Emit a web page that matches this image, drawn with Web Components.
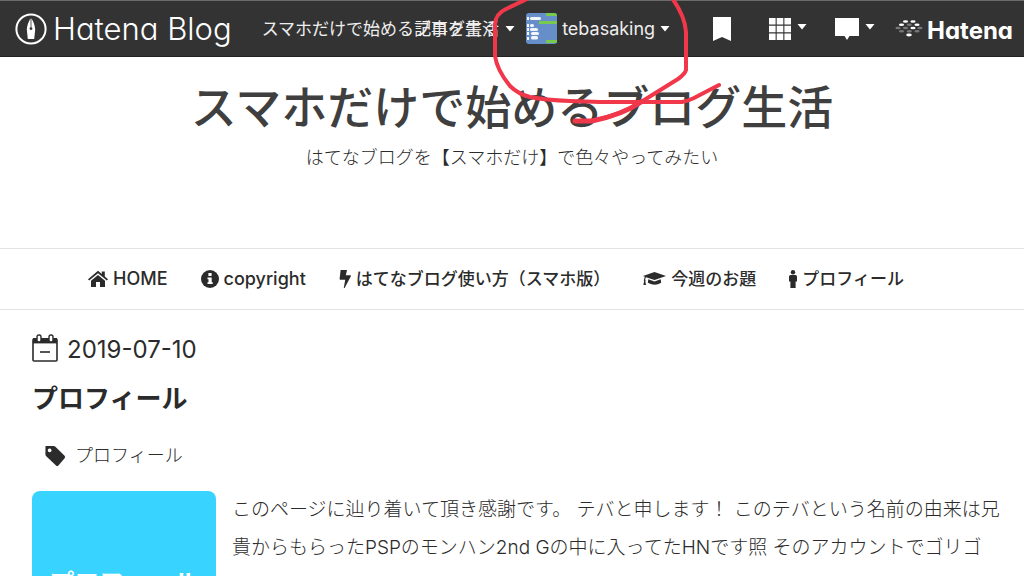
<!DOCTYPE html>
<html lang="ja">
<head>
<meta charset="utf-8">
<meta name="viewport" content="width=device-width, initial-scale=1">
<title>スマホだけで始めるブログ生活</title>
<style>
html { scrollbar-width: none; }
body { margin: 0; background: #fff; color: #2b2b2b; font-family: Inter, "Noto Sans CJK JP", sans-serif; }
</style>
</head>
<body>
<blog-page></blog-page>
<script>
const define = (name, html) => {
  const template = document.createElement('template');
  template.innerHTML = html;
  customElements.define(name, class extends HTMLElement {
    constructor() {
      super();
      this.attachShadow({ mode: 'open' }).append(template.content.cloneNode(true));
    }
  });
};

define('caret-down', `
<style>:host { display: block; } svg { display: block; }</style>
<svg width="10" height="6" viewBox="0 0 10 6" aria-hidden="true"><path d="M0.5 0H9.5L5 5.6Z" fill="#fff"/></svg>`);

define('blog-logo', `
<style>
:host { display: block; }
a { display: flex; align-items: center; gap: 6px; color: #fff; text-decoration: none; font-size: 31px; line-height: 36px; font-weight: 300; white-space: nowrap; font-feature-settings: "cv11"; }
svg { display: block; flex: none; }
</style>
<a href="#">
  <svg width="32" height="32" viewBox="0 0 32 32" aria-hidden="true">
    <circle cx="16" cy="16" r="14.6" fill="none" stroke="#fff" stroke-width="2"/>
    <path d="M15.6 5.2V14.2a1.4 1.4 0 1 0 .8 0V5.2C18.6 9 20 12.6 20.2 16.4L19.2 26H12.8L11.8 16.4C12 12.6 13.4 9 15.6 5.2Z" fill="#fff"/>
  </svg><span>Hatena Blog</span>
</a>`);

define('blog-menu', `
<style>
:host { display: flex; align-items: center; gap: 6px; font-size: 17px; line-height: 24px; white-space: nowrap; color: #eee; }
.links { display: grid; }
a, button { grid-area: 1 / 1; color: inherit; font: inherit; text-decoration: none; background: none; border: 0; padding: 0; }
button { justify-self: start; }
a { justify-self: end; }
</style>
<div class="links"><button type="button">スマホだけで始めるブログ生活</button><a href="#">記事を書く</a></div>
<caret-down></caret-down>`);

define('user-menu', `
<style>
:host { display: block; }
button { display: flex; align-items: center; gap: 5px; color: #eee; font: inherit; font-size: 18px; line-height: 24px; background: none; border: 0; padding: 0; }
svg { display: block; }
</style>
<button type="button">
  <svg width="31" height="31" viewBox="0 0 31 31" aria-hidden="true">
    <clipPath id="r"><rect width="31" height="31" rx="3"/></clipPath>
    <g clip-path="url(#r)">
      <rect width="31" height="31" fill="#668fca"/>
      <path d="M20 0h11v3H20zM13 8h18v3H13zM20 27h11v3H20z" fill="#79c94f"/>
      <g fill="#f2f6fb"><rect x="4" y="4" width="11" height="3" rx="1.5"/><rect x="4" y="11" width="4" height="3" rx="1.5"/><rect x="4" y="15" width="8" height="3" rx="1.5"/><rect x="5" y="19" width="8" height="3" rx="1.5"/><rect x="5" y="23" width="7" height="3.4" rx="1.5"/><path d="M1 4h2v3H1zM1 11h2v3H1zM1 15h2v3H1zM1 19h2v3H1zM1 24h2v3H1z"/></g>
    </g>
  </svg><span>tebasaking</span><caret-down></caret-down>
</button>`);

define('icon-tools', `
<style>
:host { display: flex; align-items: center; gap: 28px; }
button { display: flex; gap: 6px; align-items: center; background: none; border: 0; padding: 0; }
.mark { margin-right: 10px; }
svg { display: block; }
caret-down { padding-bottom: 4px; }
</style>
<button class="mark" type="button" aria-label="ブックマーク"><svg width="18" height="24" viewBox="0 0 18 24"><path d="M0 0H18V24L9 20L0 24Z" fill="#fff"/></svg></button>
<button type="button" aria-label="サービス一覧"><svg width="22" height="22" viewBox="0 0 22 22"><path d="M0 0h6.6v6.6H0zM7.7 0h6.6v6.6H7.7zM15.4 0h6.6v6.6h-6.6zM0 7.7h6.6v6.6H0zM7.7 7.7h6.6v6.6H7.7zM15.4 7.7h6.6v6.6h-6.6zM0 15.4h6.6v6.6H0zM7.7 15.4h6.6v6.6H7.7zM15.4 15.4h6.6v6.6h-6.6z" fill="#fff"/></svg><caret-down></caret-down></button>
<button type="button" aria-label="お知らせ"><svg width="24" height="22" viewBox="0 0 24 22"><path d="M0 0H24V18H14.5L12 22L9.5 18H0Z" fill="#fff"/></svg><caret-down></caret-down></button>`);

define('hatena-mark', `
<style>
:host { display: block; }
a { display: flex; align-items: center; gap: 4px; color: #fff; text-decoration: none; font-weight: 700; font-size: 24px; line-height: 30px; font-feature-settings: "cv11"; }
span { padding-top: 4px; }
svg { display: block; }
</style>
<a href="#"><svg width="28" height="17" viewBox="0 0 28 17" aria-hidden="true">
  <g fill="#fff"><ellipse cx="10.5" cy="1.5" rx="2.6" ry="1.3"/><ellipse cx="18" cy="1.5" rx="2.6" ry="1.3"/><ellipse cx="6.5" cy="4.7" rx="2.6" ry="1.3"/><ellipse cx="22" cy="4.7" rx="2.6" ry="1.3"/><ellipse cx="18" cy="8" rx="2.6" ry="1.3"/><ellipse cx="14" cy="15" rx="2.8" ry="1.4"/></g>
  <g fill="#777"><ellipse cx="14.3" cy="4.7" rx="2.6" ry="1.3"/><ellipse cx="3" cy="8" rx="2.6" ry="1.3"/><ellipse cx="10.5" cy="8" rx="2.6" ry="1.3"/><ellipse cx="25" cy="8" rx="2.6" ry="1.3"/><ellipse cx="6.5" cy="11.3" rx="2.6" ry="1.3"/><ellipse cx="14.3" cy="11.3" rx="2.6" ry="1.3"/><ellipse cx="22" cy="11.3" rx="2.6" ry="1.3"/></g>
</svg><span>Hatena</span></a>`);

define('global-header', `
<style>
:host { display: flex; align-items: center; height: 57px; box-sizing: border-box; padding: 0 11px 0 15px; background: #333; border-top: 1px solid #6b6b6b; border-bottom: 1px solid #222; }
blog-menu { margin-left: 30px; }
user-menu { margin-left: 11px; }
icon-tools { margin-left: auto; }
hatena-mark { margin-left: 20px; }
</style>
<blog-logo></blog-logo><blog-menu></blog-menu><user-menu></user-menu><icon-tools></icon-tools><hatena-mark></hatena-mark>`);

define('blog-title', `
<style>
:host { display: block; text-align: center; padding: 16px 16px 78px; }
h1 { margin: 0; font-size: 46px; line-height: 68px; font-weight: 500; color: #3f3f3f; }
h1 a { color: inherit; text-decoration: none; }
p { margin: 4px 0 0; font-size: 18px; line-height: 25px; font-weight: 300; }
</style>
<h1><a href="#">スマホだけで始めるブログ生活</a></h1>
<p>はてなブログを【スマホだけ】で色々やってみたい</p>`);

define('nav-item', `
<style>
:host { display: block; }
a { display: flex; align-items: center; gap: 5px; color: #2b2b2b; text-decoration: none; white-space: nowrap; }
</style>
<a href="#"><slot name="icon"></slot><slot></slot></a>`);

define('site-nav', `
<style>
:host { display: block; border: solid #e3e3e3; border-width: 1px 0; }
nav { display: flex; justify-content: center; gap: 33px; padding: 18px 32px 18px 0; font-size: 17px; line-height: 24px; font-weight: 500; }
.latin { font-size: 18px; }
svg { display: block; fill: #2b2b2b; }
</style>
<nav>
  <nav-item class="latin"><svg slot="icon" width="20" height="18" viewBox="0 0 20 18"><path d="M10 0.8L13.8 4V1.4H16.8V6.5L20 9.2L18.9 10.5L10 3.2L1.1 10.5L0 9.2Z"/><path d="M10 5L17 10.8V17H12V12H8V17H3V10.8Z"/></svg>HOME</nav-item>
  <nav-item class="latin"><svg slot="icon" width="18" height="18" viewBox="0 0 18 18"><circle cx="9" cy="9" r="9"/><path d="M7.4 3h3.2v3H7.4zM6.5 7.4h4.2v4.8h1v1.9H6.5v-1.9h1V9.3h-1z" fill="#fff"/></svg>copyright</nav-item>
  <nav-item><svg slot="icon" width="12" height="18" viewBox="0 0 12 18"><path d="M1.6 0H8L6.8 5.2H11.4L12 6L5.6 18H4.8L6.2 9.8H1L0.6 9Z"/></svg>はてなブログ使い方（スマホ版）</nav-item>
  <nav-item><svg slot="icon" width="23" height="18" viewBox="0 0 23 18"><path d="M11.5 2L23 6L11.5 10L3 7.2Q2.2 8 2.2 9.3Q3 10.2 2.3 11L3 15H0.4L1.1 11Q0.4 10.2 1.2 9.3Q1.2 7.6 2 6.8L0 6Z"/><path d="M5.3 9.2L11.5 11.4L17.7 9.2L18.2 12.8Q12 16.5 4.8 12.8Z"/></svg>今週のお題</nav-item>
  <nav-item><svg slot="icon" width="8" height="18" viewBox="0 0 8 18"><circle cx="4" cy="2.2" r="2.2"/><path d="M1.6 5H6.4Q8 5 8 6.6V11.6H6.6V18H1.4V11.6H0V6.6Q0 5 1.6 5Z"/></svg>プロフィール</nav-item>
</nav>`);

define('profile-picture', `
<style>
:host { display: grid; place-items: center; width: 184px; height: 184px; flex: none; border-radius: 8px; background: #38d4ff; color: #fff; font-size: 25px; line-height: 36px; font-weight: 700; }
</style>
<span><slot></slot></span>`);

define('blog-entry', `
<style>
:host { display: block; padding: 22px 32px 32px; }
.date, .tag { display: flex; align-items: center; }
.date { gap: 9px; font-size: 24px; line-height: 36px; }
h2 { margin: 12px 0 0; font-size: 26px; line-height: 38px; font-weight: 700; }
h2 a, .tag a { color: inherit; text-decoration: none; }
.tag { gap: 9px; margin-top: 25px; padding-left: 12px; font-size: 18px; line-height: 26px; font-weight: 300; }
.body { display: flex; gap: 16px; margin-top: 22px; }
p { margin: 0; flex: 1; font-size: 19px; line-height: 38px; font-weight: 300; margin-right: -16px; }
svg { display: block; }
</style>
<article>
  <div class="date"><svg width="26" height="32" viewBox="0 0 26 32" aria-hidden="true"><rect x="1" y="5" width="24" height="22" rx="1" fill="#fff" stroke="#2b2b2b" stroke-width="1.6"/><path d="M1 4h24v5.4H1z" fill="#2b2b2b"/><rect x="5" y="1" width="4" height="7" rx="1.8" fill="#fff" stroke="#2b2b2b" stroke-width="1.4"/><rect x="17" y="1" width="4" height="7" rx="1.8" fill="#fff" stroke="#2b2b2b" stroke-width="1.4"/><path d="M8 18h10" stroke="#2b2b2b" stroke-width="1.6"/></svg><time datetime="2019-07-10">2019-07-10</time></div>
  <h2><a href="#">プロフィール</a></h2>
  <div class="tag"><svg width="22" height="22" viewBox="0 0 22 22" aria-hidden="true"><path fill-rule="evenodd" d="M1.5 1H9.5Q10.6 1 11.4 1.8L20.6 10.8Q21.8 12 20.6 13.2L14.4 20.4Q13.2 21.5 12 20.4L2.5 11.4Q1.4 10.4 1.4 9.2ZM5.6 3.4a1.9 1.9 0 1 0 .1 0Z" fill="#2b2b2b"/></svg><a href="#">プロフィール</a></div>
  <div class="body">
    <profile-picture>プロフィール</profile-picture>
    <p>このページに辿り着いて頂き感謝です。 テバと申します！ このテバという名前の由来は兄貴からもらったPSPのモンハン2nd Gの中に入ってたHNです照 そのアカウントでゴリゴ</p>
  </div>
</article>`);

define('pen-mark', `
<style>:host { position: absolute; top: 0; left: 492px; pointer-events: none; } svg { display: block; }</style>
<svg width="230" height="126" viewBox="492 0 230 126" fill="none" stroke="#f0384a" stroke-linecap="round" stroke-linejoin="round" aria-hidden="true">
  <path d="M527 -1L506 9Q495 14 495 25V56Q497 70 510 86Q518 94 530 97Q545 100 570 101L600 102H682Q688 101 694 98L719 85" stroke-width="4"/>
  <path d="M672 -2Q685 16 686 32V70Q685 74 678 79L641 102Q625 113 600 119" stroke-width="4"/>
  <path d="M641 102Q622 115 592 121H575" stroke-width="5"/>
</svg>`);

define('blog-page', `
<style>:host { display: block; position: relative; }</style>
<global-header></global-header>
<main><blog-title></blog-title><site-nav></site-nav><blog-entry></blog-entry></main>
<pen-mark></pen-mark>`);
</script>
</body>
</html>
